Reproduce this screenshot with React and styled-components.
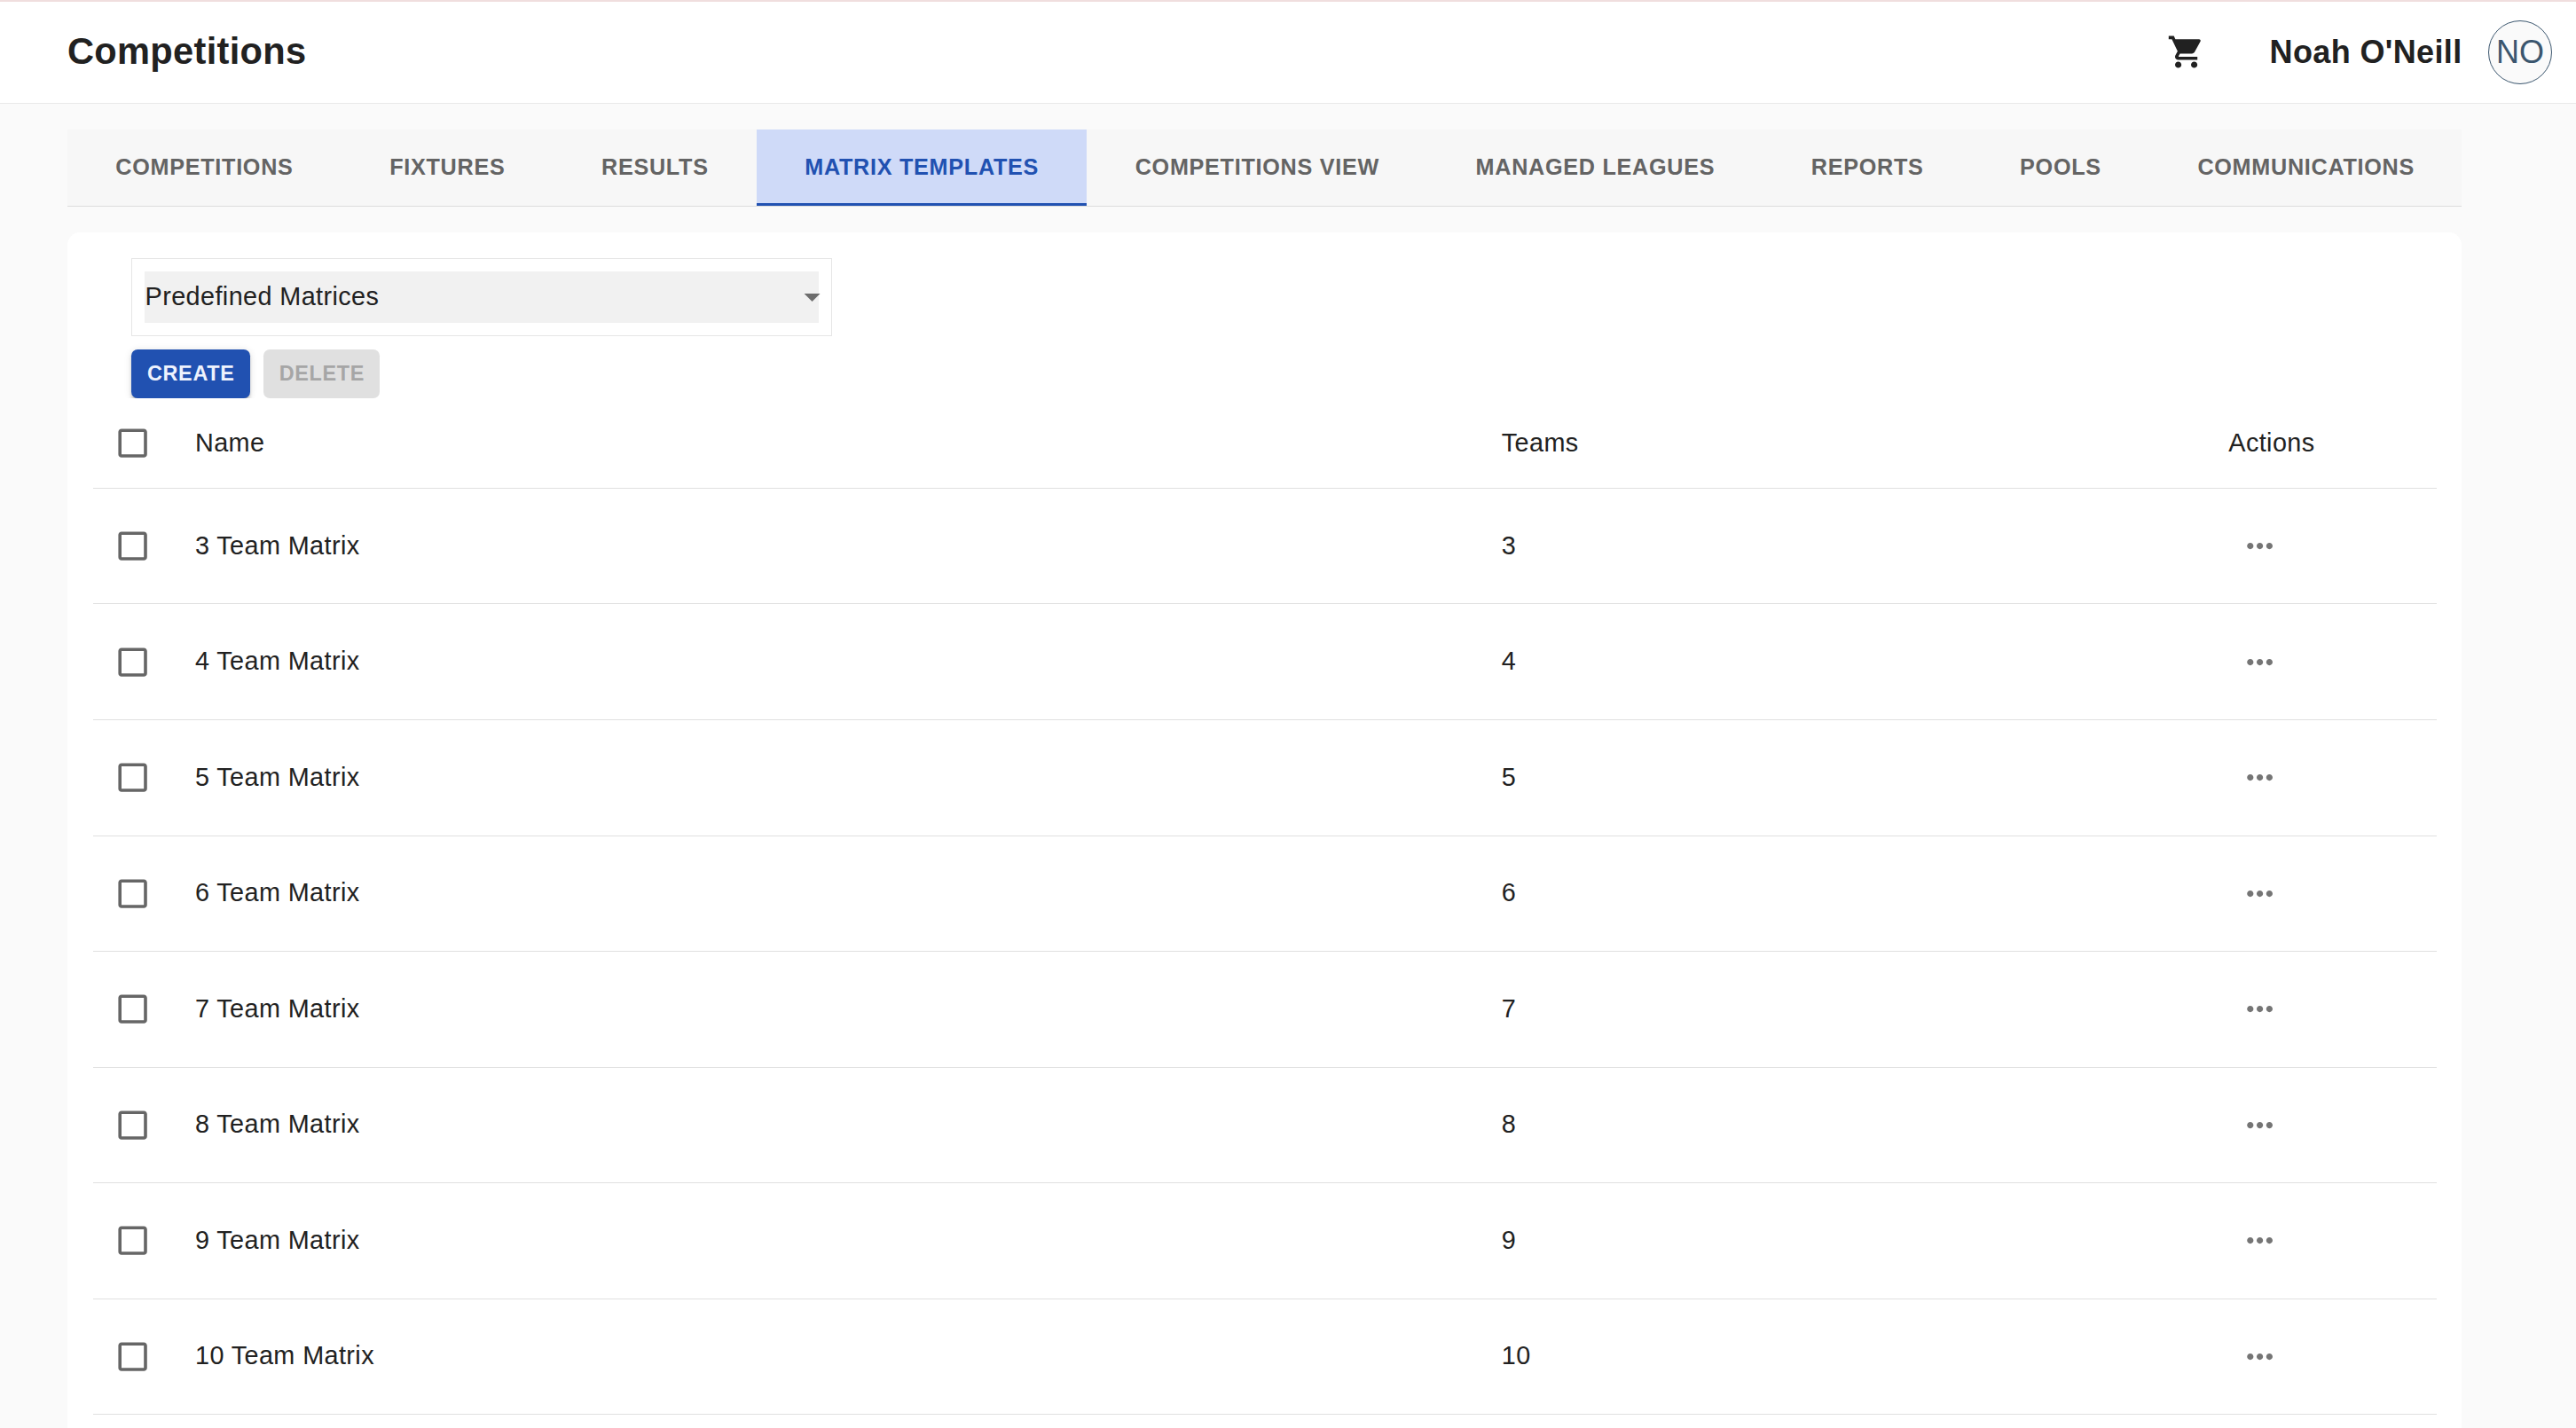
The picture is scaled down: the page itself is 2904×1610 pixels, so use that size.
import React from "react";
import styled, { createGlobalStyle } from "styled-components";
import {
  MdShoppingCart,
  MdMoreHoriz,
  MdCheckBoxOutlineBlank,
  MdArrowDropDown,
} from "react-icons/md";

const GlobalStyle = createGlobalStyle`
  * { box-sizing: border-box; }
  html, body { margin: 0; height: 100%; overflow: hidden; }
  body {
    background: #fafafa;
    color: #212121;
    font-family: "Liberation Sans", Arial, Helvetica, sans-serif;
    font-size: 28.8px;
    letter-spacing: 0.4px;
  }
  svg { display: block; flex-shrink: 0; }
`;

const Page = styled.div`
  height: 1610px;
  overflow: hidden;
  display: flex;
  flex-direction: column;
`;

const Header = styled.header`
  flex: none;
  height: 117px;
  display: flex;
  align-items: center;
  padding: 0 27px 0 76px;
  background: #fff;
  border-top: 2px solid #f0dede;
  border-bottom: 1px solid #e9e9e9;
`;

const Title = styled.h1`
  margin: 0 auto 0 0;
  padding-bottom: 2px;
  font-size: 41.6px;
  line-height: 56px;
  letter-spacing: 0.31px;
`;

const CartButton = styled.button`
  display: flex;
  padding: 0;
  margin-right: 72px;
  border: 0;
  background: none;
  color: #212121;
  font-size: 43.2px;
`;

const UserName = styled.span`
  font-size: 36px;
  font-weight: 700;
  line-height: 44px;
  letter-spacing: 0.37px;
`;

const Avatar = styled.div`
  width: 72px;
  height: 72px;
  margin-left: 29.4px;
  display: flex;
  align-items: center;
  justify-content: center;
  border: 1px solid #3b566e;
  border-radius: 50%;
  background: #fafafa;
  color: #3b566e;
  font-size: 36px;
  letter-spacing: 0;
`;

const Main = styled.main`
  flex: 1;
  display: flex;
  flex-direction: column;
  gap: 29px;
  width: 2775px;
  padding: 29px 0 0 76px;
`;

const Tabs = styled.nav`
  flex: none;
  display: flex;
  height: 87px;
  background: #f7f7f7;
  border-bottom: 1px solid #dcdcdc;
`;

const Tab = styled.button`
  flex: none;
  padding: 2px 54.28px 0;
  border: 0;
  border-bottom: 3px solid ${(p) => (p.$active ? "#2151b1" : "transparent")};
  background: ${(p) => (p.$active ? "#cfdaf8" : "transparent")};
  color: ${(p) => (p.$active ? "#2151b1" : "#646464")};
  font: 700 25.2px "Liberation Sans", Arial, sans-serif;
  letter-spacing: 0.72px;
  white-space: nowrap;
`;

const Card = styled.section`
  flex: 1;
  background: #fff;
  border-radius: 14.4px 14.4px 0 0;
  padding: 29px 28px 0 29px;
`;

const SelectBox = styled.div`
  width: 790px;
  height: 88px;
  margin-left: 43px;
  padding: 14px;
  border: 1px solid #e6e6e6;
`;

const SelectValue = styled.div`
  display: flex;
  align-items: center;
  justify-content: space-between;
  height: 58px;
  background: #f1f1f1;

  span {
    padding: 0 0 2px 0.6px;
  }

  svg {
    margin-right: -14px;
    color: #6d6d6d;
    font-size: 43.2px;
  }
`;

const ButtonRow = styled.div`
  display: flex;
  gap: 15px;
  margin: 15px 0 0 43px;
  clip-path: inset(-20px -20px 0 -20px);
`;

const Button = styled.button`
  height: 55px;
  padding: 0 17.3px 0 18px;
  border: 0;
  border-radius: 7.2px;
  background: ${(p) => (p.disabled ? "#e0e0e0" : "#2151b1")};
  color: ${(p) => (p.disabled ? "#a6a6a6" : "#eef2fd")};
  font: 700 23.4px "Liberation Sans", Arial, sans-serif;
  letter-spacing: 0.67px;
  box-shadow: ${(p) =>
    p.disabled
      ? "none"
      : "0 5.4px 1.8px -3.6px rgba(0,0,0,.2), 0 3.6px 3.6px rgba(0,0,0,.14), 0 1.8px 9px rgba(0,0,0,.12)"};
`;

const Cell = styled.div`
  padding-bottom: 1px;
  line-height: 41px;
`;

const Row = styled.div`
  display: grid;
  grid-template-columns: 115px 1472.8px 819.5px 1fr;
  align-items: center;
  height: ${(p) => (p.$head ? "101.95px" : "130.532px")};
  border-bottom: 1px solid #e0e0e0;

  ${Cell} {
    padding-bottom: ${(p) => (p.$head ? "0" : "1px")};
  }
`;

const CheckCell = styled.div`
  padding-left: 22.5px;
  color: #666;
  font-size: 43.2px;
`;

const MenuCell = styled.div`
  padding-left: 13.5px;
  color: #757575;
  font-size: 43.2px;
`;

const TABS = [
  "COMPETITIONS",
  "FIXTURES",
  "RESULTS",
  "MATRIX TEMPLATES",
  "COMPETITIONS VIEW",
  "MANAGED LEAGUES",
  "REPORTS",
  "POOLS",
  "COMMUNICATIONS",
];

const TEAM_COUNTS = [3, 4, 5, 6, 7, 8, 9, 10];

export default function App() {
  return (
    <Page>
      <GlobalStyle />
      <Header>
        <Title>Competitions</Title>
        <CartButton aria-label="Cart">
          <MdShoppingCart />
        </CartButton>
        <UserName>Noah O'Neill</UserName>
        <Avatar>NO</Avatar>
      </Header>
      <Main>
        <Tabs>
          {TABS.map((label) => (
            <Tab key={label} $active={label === "MATRIX TEMPLATES"}>
              {label}
            </Tab>
          ))}
        </Tabs>
        <Card>
          <SelectBox>
            <SelectValue>
              <span>Predefined Matrices</span>
              <MdArrowDropDown />
            </SelectValue>
          </SelectBox>
          <ButtonRow>
            <Button>CREATE</Button>
            <Button disabled>DELETE</Button>
          </ButtonRow>
          <Row $head>
            <CheckCell>
              <MdCheckBoxOutlineBlank />
            </CheckCell>
            <Cell>Name</Cell>
            <Cell>Teams</Cell>
            <Cell>Actions</Cell>
          </Row>
          {TEAM_COUNTS.map((count) => (
            <Row key={count}>
              <CheckCell>
                <MdCheckBoxOutlineBlank />
              </CheckCell>
              <Cell>{count} Team Matrix</Cell>
              <Cell>{count}</Cell>
              <MenuCell>
                <MdMoreHoriz />
              </MenuCell>
            </Row>
          ))}
        </Card>
      </Main>
    </Page>
  );
}
